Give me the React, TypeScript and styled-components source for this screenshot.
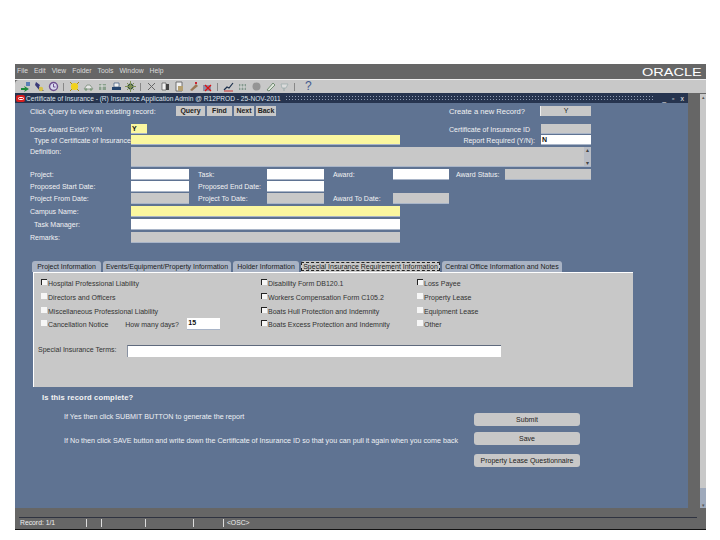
import React from "react";
import styled, { createGlobalStyle } from "styled-components";

const Global = createGlobalStyle`
  html, body { margin: 0; padding: 0; background: #fff; }
  body { font-family: "Liberation Sans", Arial, sans-serif; font-size: 7px; }
`;

const Frame = styled.div`
  margin: 64px 0 0 15px;
  width: 691px;
  height: 465px;
  display: flex;
  flex-direction: column;
  background: #666;
  border-bottom: 1px solid #111;
  box-sizing: content-box;
`;
const MenuBar = styled.div`
  height: 15px;
  flex: none;
  display: flex;
  align-items: center;
  justify-content: space-between;
  padding: 0 0 0 2px;
  color: #dcdcdc;
  font-size: 6.8px;
  border-bottom: 1px solid #eee;
  overflow: hidden;
`;
const Menus = styled.div`
  display: flex;
  gap: 6px;
  margin-top: -2px;
`;
const Logo = styled.span`
  font-family: "Liberation Sans", sans-serif;
  font-size: 11px;
  font-weight: 400;
  color: #fff;
  display: inline-block;
  width: 64px;
  flex: none;
  transform: scaleX(1.32);
  transform-origin: left center;
  white-space: nowrap;
`;
const Toolbar = styled.div`
  height: 13px;
  flex: none;
  background: #c8c8c8;
  display: flex;
  align-items: center;
  padding-left: 5px;
  border-top-left-radius: 4px;
`;
const ToolIcon = styled.svg`
  width: 11px;
  height: 11px;
  flex: none;
  margin-right: 3px;
`;
const Sep = styled.span`
  width: 1px;
  height: 8px;
  background: #888;
  margin: 0 5px 0 1px;
  flex: none;
`;
const Help = styled.span`
  color: #445a90;
  font-size: 12px;
  line-height: 11px;
  margin-left: 5px;
`;
const Body = styled.div`
  flex: 1;
  display: flex;
  min-height: 0;
`;
const Main = styled.div`
  width: 673px;
  display: flex;
  flex-direction: column;
`;
const Title = styled.div`
  height: 10px;
  flex: none;
  background: #26344f;
  color: #dfe4ee;
  font-size: 6.6px;
  display: flex;
  align-items: center;
  white-space: nowrap;
  overflow: hidden;
  padding-left: 1px;
`;
const TitleMark = styled.span`
  width: 9px;
  height: 7px;
  background: #d81e1e;
  border-radius: 2px;
  flex: none;
  margin-right: 1px;
  display: flex;
  align-items: center;
  justify-content: center;
  &::after {
    content: "";
    width: 6px;
    height: 3px;
    border: 1px solid #fff;
    border-radius: 2px;
    box-sizing: border-box;
  }
`;
const TitleDots = styled.span`
  flex: 1;
  height: 6px;
  margin: 0 8px 0 4px;
  background-image: radial-gradient(#8f9cb5 0.6px, transparent 0.7px);
  background-size: 3px 3px;
`;
const TitleBtns = styled.span`
  font-size: 7px;
  letter-spacing: 2px;
  padding-right: 2px;
  color: #eee;
`;
const Form = styled.div`
  flex: 1;
  background: #5f7392;
  padding: 3px 97px 0 15px;
  display: flex;
  flex-direction: column;
  color: #f2f2f2;
`;
const Row = styled.div<{ $h?: number; $mt?: number; $between?: boolean }>`
  display: flex;
  align-items: center;
  height: ${p => p.$h ?? 10}px;
  margin-top: ${p => p.$mt ?? 0}px;
  justify-content: ${p => (p.$between ? "space-between" : "flex-start")};
  flex: none;
`;
const Group = styled.div`
  display: flex;
  align-items: center;
`;
const Label = styled.span<{ $w?: number; $right?: boolean; $ml?: number; $mr?: number }>`
  display: inline-block;
  width: ${p => (p.$w ? `${p.$w}px` : "auto")};
  text-align: ${p => (p.$right ? "right" : "left")};
  margin-left: ${p => p.$ml ?? 0}px;
  margin-right: ${p => p.$mr ?? 0}px;
  white-space: nowrap;
  flex: none;
  font-size: 7px;
`;
const TopLabel = styled(Label)`
  align-self: flex-start;
  margin-top: 1px;
`;
const CreateLabel = styled(Label)`
  font-size: 7.6px;
`;
const colors = { y: "#fbf7a0", w: "#ffffff", g: "#c8c8c8" };
const Field = styled.div<{ $w: number; $c: "y" | "w" | "g"; $h?: number }>`
  width: ${p => p.$w}px;
  height: ${p => p.$h ?? 10}px;
  flex: none;
  background: ${p => colors[p.$c]};
  border-bottom: 1px solid #a9b5c8;
  box-sizing: border-box;
  color: #111;
  font-size: 7px;
  font-weight: 700;
  line-height: 9px;
  padding-left: 1px;
  position: relative;
`;
const QueryBtn = styled.div<{ $w: number }>`
  width: ${p => p.$w}px;
  height: 10px;
  background: #c8c8c8;
  color: #222;
  font-size: 7px;
  font-weight: 700;
  text-align: center;
  line-height: 10px;
  margin-right: 2px;
`;
const ClickText = styled.span`
  width: 146px;
  font-size: 7.4px;
  flex: none;
`;
const CreateBtn = styled.div`
  width: 51px;
  height: 10px;
  background: #c8c8c8;
  color: #222;
  text-align: center;
  line-height: 10px;
  font-size: 7px;
  border-left: 1px solid #eee;
  box-sizing: border-box;
`;
const DefScroll = styled.div`
  position: absolute;
  top: 0;
  right: 0;
  width: 7px;
  height: 100%;
  background: #b8bcc4;
  display: flex;
  flex-direction: column;
  justify-content: space-between;
  align-items: center;
  color: #444;
  font-size: 6px;
  line-height: 6px;
  font-weight: 400;
`;
const Tabs = styled.div`
  display: flex;
  align-items: flex-end;
  gap: 2px;
  margin: 18px 0 0 2px;
  height: 11px;
  flex: none;
`;
const Tab = styled.div<{ $active?: boolean; $w: number }>`
  width: ${p => p.$w}px;
  height: 11px;
  box-sizing: border-box;
  background: ${p => (p.$active ? "#c8c8c8" : "#a9b3c4")};
  color: #1c1c1c;
  font-size: 7px;
  text-align: center;
  line-height: 11px;
  white-space: nowrap;
  border-radius: 3px 3px 0 0;
  overflow: hidden;
`;
const TabLabel = styled.span<{ $active?: boolean }>`
  border: ${p => (p.$active ? "1px dashed #222" : "none")};
  padding: 0 1px;
`;
const Panel = styled.div`
  margin-left: 3px;
  width: 600px;
  height: 115px;
  flex: none;
  background: #c8c8c8;
  border-top: 1px solid #fff;
  border-left: 1px solid #fff;
  box-sizing: border-box;
  color: #333;
  padding: 3px 0 0 7px;
  display: flex;
  flex-direction: column;
`;
const CheckGrid = styled.div`
  display: grid;
  grid-template-columns: 220px 156px 1fr;
  grid-template-rows: 14px 14px 14px 12px;
  align-items: center;
`;
const Check = styled.div<{ $top?: boolean }>`
  display: flex;
  align-items: center;
  gap: 1px;
  font-size: 7px;
  white-space: nowrap;
  &::before {
    content: "";
    width: 6px;
    height: 6px;
    box-sizing: border-box;
    flex: none;
    background: #f6f6f6;
    border-top: ${p => (p.$top ? "1px solid #222" : "0")};
    border-left: ${p => (p.$top ? "1px solid #222" : "0")};
    margin-top: -2px;
  }
`;
const DaysLabel = styled.span`
  margin-left: 16px;
  width: 61px;
  flex: none;
`;
const TermsRow = styled.div`
  display: flex;
  align-items: center;
  margin: 15px 0 0 -3px;
  height: 12px;
`;
const TermsLabel = styled.span`
  width: 89px;
  flex: none;
  font-size: 7px;
  margin-top: -4px;
`;
const TermsField = styled.div`
  width: 374px;
  height: 12px;
  background: #fff;
  border-top: 1px solid #5f6a7d;
  border-left: 1px solid #8a93a3;
  box-sizing: border-box;
`;
const Bottom = styled.div`
  display: flex;
  flex: none;
`;
const Questions = styled.div`
  width: 432px;
  flex: none;
  padding: 6px 0 0 12px;
  display: flex;
  flex-direction: column;
`;
const Ask = styled.div`
  font-size: 7.6px;
  font-weight: 700;
  color: #f4f4f4;
  letter-spacing: 0.15px;
`;
const Note = styled.div<{ $mt: number }>`
  margin: ${p => p.$mt}px 0 0 22px;
  font-size: 7.17px;
  white-space: nowrap;
  color: #eef0f4;
`;
const Actions = styled.div`
  display: flex;
  flex-direction: column;
  padding-top: 26px;
`;
const Action = styled.div<{ $mt?: number }>`
  width: 106px;
  height: 13px;
  margin-top: ${p => p.$mt ?? 0}px;
  background: #c8c8c8;
  border-radius: 3px;
  color: #222;
  text-align: center;
  line-height: 13px;
  font-size: 7px;
  white-space: nowrap;
`;
const Strip = styled.div`
  width: 12px;
  flex: none;
  background: #666;
`;
const Scroll = styled.div`
  width: 6px;
  flex: none;
  background: #c8c8c8;
  display: flex;
  flex-direction: column;
  justify-content: space-between;
  align-items: center;
  color: #555;
  font-size: 5px;
  line-height: 6px;
  margin-top: 1px;
`;
const ScrollEnd = styled.div`
  width: 6px;
  height: 20px;
  background: #9ea9bb;
  display: flex;
  align-items: flex-end;
  justify-content: center;
`;
const Status = styled.div`
  height: 21px;
  flex: none;
  background: #666;
  padding-top: 9px;
  box-sizing: border-box;
`;
const StatusCells = styled.div`
  border-top: 1px solid #2f3340;
  margin: 0 9px 0 4px;
  height: 10px;
  display: flex;
  align-items: center;
  color: #eee;
  font-size: 6.8px;
`;
const Cell = styled.span<{ $w: number; $last?: boolean }>`
  width: ${p => p.$w}px;
  height: 8px;
  line-height: 8px;
  flex: none;
  padding-left: 1px;
  border-right: ${p => (p.$last ? "0" : "1px solid #ddd")};
  box-sizing: border-box;
`;

type IconProps = { kind: string };
const Icon = ({ kind }: IconProps) => {
  const d: Record<string, React.ReactNode> = {
    save: <><path d="M1 7h4l-1-2 5 3-5 3 1-2H1z" fill="#1d8a3a" /><path d="M6 1h4v4H6z" fill="#5b7fb5" /></>,
    next: <><path d="M2 1l4 3-1 2 5 4-4 0-5-6z" fill="#3b3b78" /><circle cx="7" cy="8" r="2.2" fill="#d7c24a" /></>,
    clock: <><circle cx="5.5" cy="5.5" r="4" fill="#d9d9ee" stroke="#6d4f90" strokeWidth="1.4" /><path d="M5.5 3v3h2" stroke="#6d4f90" fill="none" /></>,
    sun: <><circle cx="5.5" cy="5.5" r="3.6" fill="#f2d21b" /><path d="M1 1l2 2M10 1L8 3M1 10l2-2M10 10L8 8" stroke="#a78a10" /></>,
    car: <><path d="M1 8l3-4h3l3 4z" fill="#e8e8e8" stroke="#8c9a8c" /><circle cx="3" cy="8.5" r="1.2" fill="#7a9a7a" /><circle cx="8" cy="8.5" r="1.2" fill="#7a9a7a" /></>,
    box: <><path d="M2 3h7v6H2z" fill="#8aa08c" /><path d="M2 5h7M5 3v6" stroke="#e0e0e0" /></>,
    print: <><path d="M1 6h9v3H1z" fill="#24456f" /><path d="M3 2h5v4H3z" fill="#f2f2f2" stroke="#24456f" strokeWidth=".6" /></>,
    gear: <><circle cx="5.5" cy="5.5" r="3" fill="#2b4d3c" /><path d="M5.5 0v11M0 5.5h11M2 2l7 7M9 2l-7 7" stroke="#7f8f55" /></>,
    cut: <path d="M2 2l7 7M9 2L2 9" stroke="#666" strokeWidth="1" fill="none" />,
    copy: <><path d="M2 2h4v7H2z" fill="#f3f3f3" stroke="#555" strokeWidth=".7" /><path d="M6 3h3v6H6z" fill="#444" /></>,
    paste: <><path d="M2 1h6v9H2z" fill="#f0f0f0" stroke="#555" strokeWidth=".8" /><path d="M4 5h5v5H4z" fill="#b5a070" /></>,
    add: <><path d="M2 9l6-6 2 2-6 5z" fill="#997755" /><path d="M7 1h2v2H7z" fill="#c23" /></>,
    del: <><path d="M1 4h8v6H1z" fill="#8c8fa6" /><path d="M3 4l6 6M9 4l-6 6" stroke="#d11" strokeWidth="1.3" /></>,
    chart: <><path d="M1 9l3-3 2 1 4-5" stroke="#1a2e4a" strokeWidth="1.2" fill="none" /><path d="M1 10h9" stroke="#c33" /></>,
    grid: <><path d="M2 3h7v6H2z" fill="#85988e" /><path d="M4 3v6M7 3v6M2 6h7" stroke="#ddd" /></>,
    globe: <circle cx="5.5" cy="5.5" r="4" fill="#959595" />,
    pen: <><path d="M2 9l6-7 2 2-6 6z" fill="#dfe6dc" stroke="#5a7a5a" strokeWidth=".8" /></>,
    tool: <><path d="M2 3h7l-2 4H3z" fill="#dcdcdc" stroke="#9aa" strokeWidth=".7" /><path d="M5 7v3" stroke="#9aa" /></>,
  };
  return <ToolIcon viewBox="0 0 11 11">{d[kind]}</ToolIcon>;
};

export default function App() {
  return (
    <>
      <Global />
      <Frame>
        <MenuBar>
          <Menus>
            <span>File</span><span>Edit</span><span>View</span><span>Folder</span><span>Tools</span><span>Window</span><span>Help</span>
          </Menus>
          <Logo>ORACLE</Logo>
        </MenuBar>
        <Toolbar>
          <Icon kind="save" /><Icon kind="next" /><Icon kind="clock" /><Sep />
          <Icon kind="sun" /><Icon kind="car" /><Icon kind="box" /><Icon kind="print" /><Icon kind="gear" /><Sep />
          <Icon kind="cut" /><Icon kind="copy" /><Icon kind="paste" /><Icon kind="add" /><Icon kind="del" /><Sep />
          <Icon kind="chart" /><Icon kind="grid" /><Icon kind="globe" /><Icon kind="pen" /><Icon kind="tool" /><Sep />
          <Help>?</Help>
        </Toolbar>
        <Body>
          <Main>
            <Title>
              <TitleMark />
              Certificate of Insurance - (R) Insurance Application Admin @ R12PROD - 25-NOV-2011
              <TitleDots />
              <TitleBtns>_ ▫ x</TitleBtns>
            </Title>
            <Form>
              <Row $between>
                <Group>
                  <ClickText>Click Query to view an existing record:</ClickText>
                  <QueryBtn $w={29}>Query</QueryBtn>
                  <QueryBtn $w={25}>Find</QueryBtn>
                  <QueryBtn $w={20}>Next</QueryBtn>
                  <QueryBtn $w={20}>Back</QueryBtn>
                </Group>
                <Group>
                  <CreateLabel $right $mr={15}>Create a new Record?</CreateLabel>
                  <CreateBtn>Y</CreateBtn>
                </Group>
              </Row>
              <Row $mt={8} $between>
                <Group>
                  <Label $w={101}>Does Award Exist? Y/N</Label>
                  <Field $w={16} $c="y">Y</Field>
                </Group>
                <Group>
                  <Label $right $mr={11}>Certificate of Insurance ID</Label>
                  <Field $w={50} $c="g" />
                </Group>
              </Row>
              <Row $mt={1} $between>
                <Group>
                  <Label $w={97} $ml={4}>Type of Certificate of Insurance:</Label>
                  <Field $w={269} $c="y" />
                </Group>
                <Group>
                  <Label $right $mr={6}>Report Required (Y/N):</Label>
                  <Field $w={50} $c="w">N</Field>
                </Group>
              </Row>
              <Row $h={20} $mt={2}>
                <TopLabel $w={101}>Definition:</TopLabel>
                <Field $w={460} $h={20} $c="g">
                  <DefScroll><span>▴</span><span>▾</span></DefScroll>
                </Field>
              </Row>
              <Row $h={11} $mt={2} $between>
                <Group>
                  <Label $w={101}>Project:</Label>
                  <Field $w={58} $h={11} $c="w" />
                  <Label $w={69} $ml={9}>Task:</Label>
                  <Field $w={57} $h={11} $c="w" />
                  <Label $w={60} $ml={9}>Award:</Label>
                  <Field $w={56} $h={11} $c="w" />
                  <Label $w={49} $ml={7}>Award Status:</Label>
                  <Field $w={86} $h={11} $c="g" />
                </Group>
              </Row>
              <Row $h={11} $mt={1}>
                <Label $w={101}>Proposed Start Date:</Label>
                <Field $w={58} $h={11} $c="w" />
                <Label $w={69} $ml={9}>Proposed End Date:</Label>
                <Field $w={57} $h={11} $c="w" />
              </Row>
              <Row $h={11} $mt={1}>
                <Label $w={101}>Project From Date:</Label>
                <Field $w={58} $h={11} $c="g" />
                <Label $w={69} $ml={9}>Project To Date:</Label>
                <Field $w={57} $h={11} $c="g" />
                <Label $w={60} $ml={9}>Award To Date:</Label>
                <Field $w={56} $h={11} $c="g" />
              </Row>
              <Row $h={11} $mt={2}>
                <Label $w={101}>Campus Name:</Label>
                <Field $w={269} $h={11} $c="y" />
              </Row>
              <Row $h={11} $mt={2}>
                <Label $w={97} $ml={4}>Task Manager:</Label>
                <Field $w={269} $h={11} $c="w" />
              </Row>
              <Row $h={11} $mt={2}>
                <Label $w={101}>Remarks:</Label>
                <Field $w={269} $h={11} $c="g" />
              </Row>
              <Tabs>
                <Tab $w={69}><TabLabel>Project Information</TabLabel></Tab>
                <Tab $w={128}><TabLabel>Events/Equipment/Property Information</TabLabel></Tab>
                <Tab $w={66}><TabLabel>Holder Information</TabLabel></Tab>
                <Tab $w={139} $active><TabLabel $active>Special Insurance Requirement Information</TabLabel></Tab>
                <Tab $w={120}><TabLabel>Central Office Information and Notes</TabLabel></Tab>
              </Tabs>
              <Panel>
                <CheckGrid>
                  <Check $top>Hospital Professional Liability</Check>
                  <Check $top>Disability Form DB120.1</Check>
                  <Check $top>Loss Payee</Check>
                  <Check>Directors and Officers</Check>
                  <Check $top>Workers Compensation Form C105.2</Check>
                  <Check>Property Lease</Check>
                  <Check>Miscellaneous Professional Liability</Check>
                  <Check $top>Boats Hull Protection and Indemnity</Check>
                  <Check>Equipment Lease</Check>
                  <Check>
                    Cancellation Notice
                    <DaysLabel>How many days?</DaysLabel>
                    <Field $w={33} $h={12} $c="w">15</Field>
                  </Check>
                  <Check $top>Boats Excess Protection and Indemnity</Check>
                  <Check>Other</Check>
                </CheckGrid>
                <TermsRow>
                  <TermsLabel>Special Insurance Terms:</TermsLabel>
                  <TermsField />
                </TermsRow>
              </Panel>
              <Bottom>
                <Questions>
                  <Ask>Is this record complete?</Ask>
                  <Note $mt={11}>If Yes then click SUBMIT BUTTON to generate the report</Note>
                  <Note $mt={16}>If No then click SAVE button and write down the Certificate of Insurance ID so that you can pull it again when you come back</Note>
                </Questions>
                <Actions>
                  <Action>Submit</Action>
                  <Action $mt={6}>Save</Action>
                  <Action $mt={9}>Property Lease Questionnaire</Action>
                </Actions>
              </Bottom>
            </Form>
          </Main>
          <Strip />
          <Scroll>
            <span>▴</span>
            <ScrollEnd>▾</ScrollEnd>
          </Scroll>
        </Body>
        <Status>
          <StatusCells>
            <Cell $w={68}>Record: 1/1</Cell>
            <Cell $w={15} />
            <Cell $w={44}>&nbsp;</Cell>
            <Cell $w={48} />
            <Cell $w={30} />
            <Cell $w={30} $last>&nbsp;&lt;OSC&gt;</Cell>
          </StatusCells>
        </Status>
      </Frame>
    </>
  );
}
